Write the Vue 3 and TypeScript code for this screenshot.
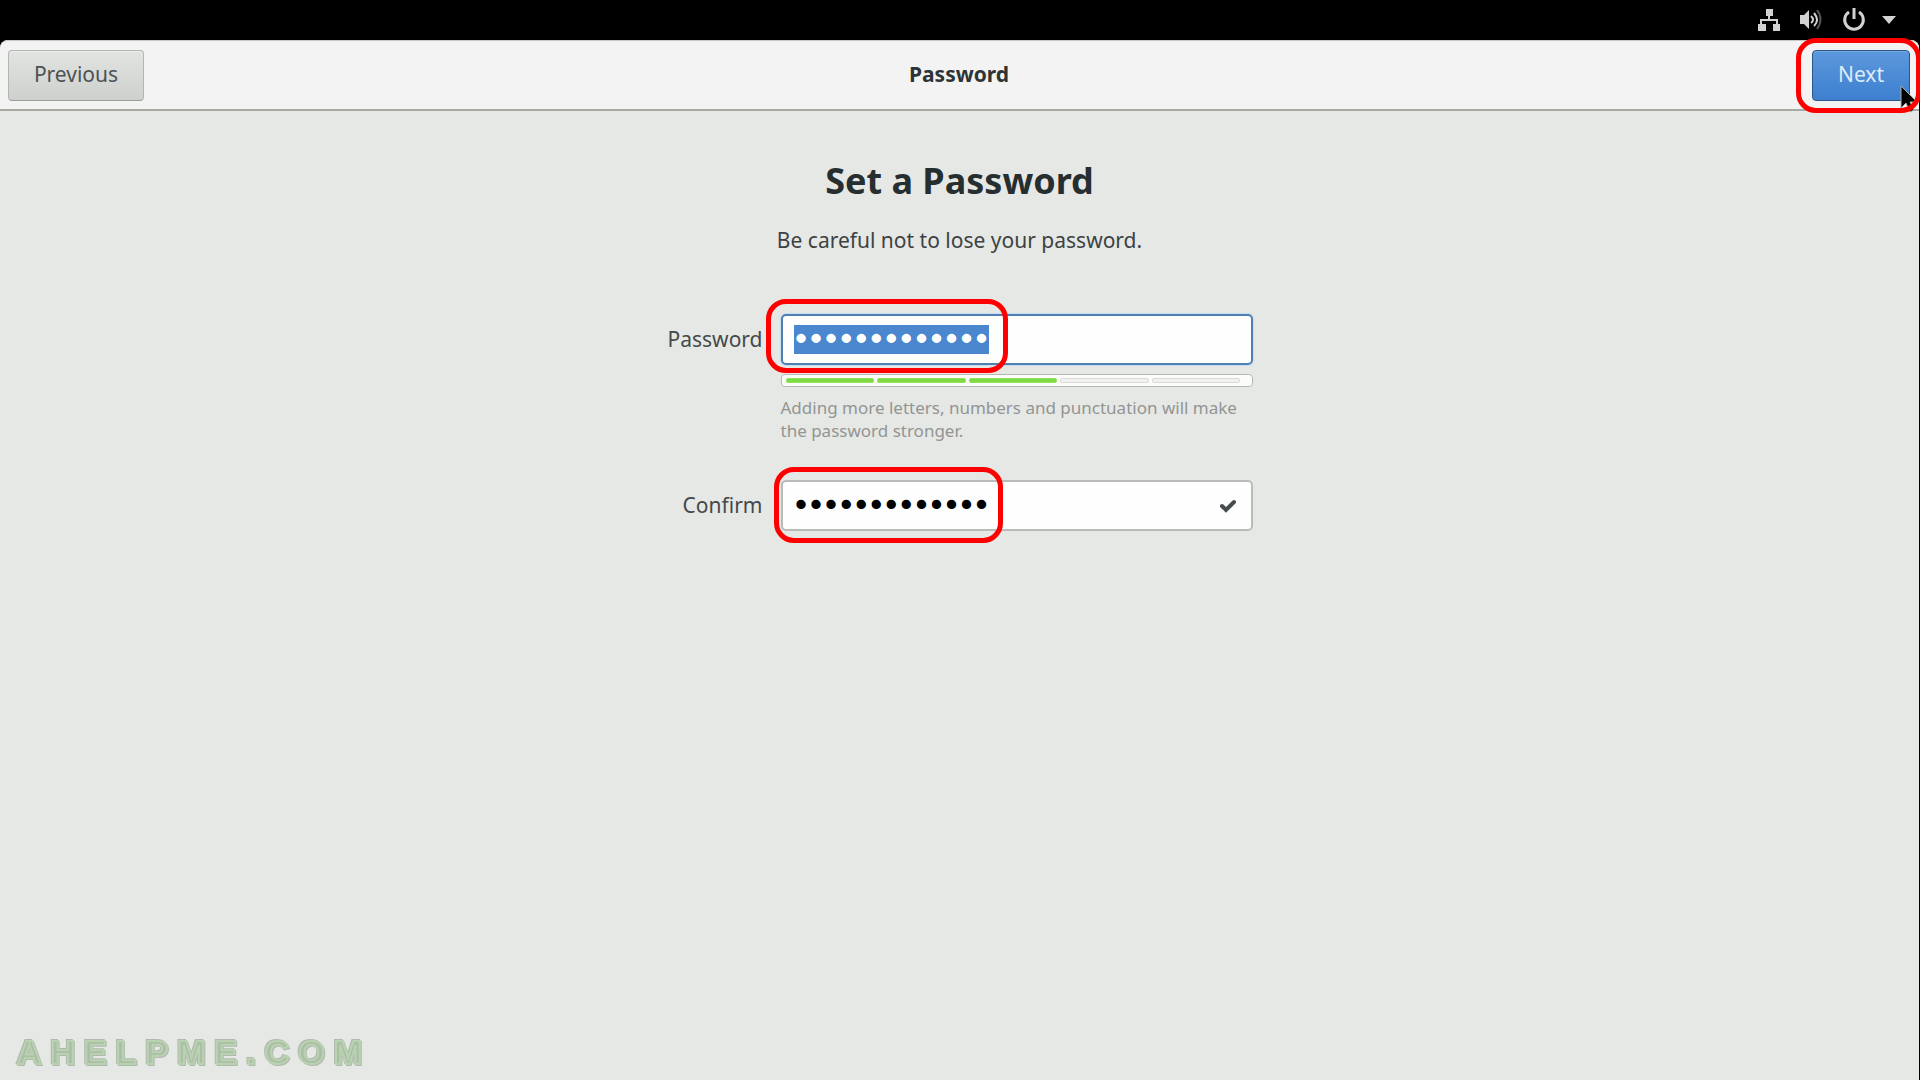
<script setup lang="ts">
import { onMounted, ref } from 'vue'

const password = ref('correct-horse')
const confirmation = ref('correct-horse')
const strength = 3
const levels = 5
const passwordField = ref<HTMLInputElement | null>(null)

onMounted(() => {
  passwordField.value?.focus()
  passwordField.value?.select()
})
</script>

<template>
  <div class="screen">
    <div class="topbar">
      <svg class="tray" viewBox="0 0 24 24" aria-label="Network">
        <path d="M9 1h7v7h-3v3h8v5h2v7h-7v-7h3v-3H5v3h4v7H1v-7h2v-5h8V8H9z" />
      </svg>
      <svg class="tray volume" viewBox="0 0 24 24" aria-label="Volume">
        <path d="M1 7h4l5-5v19l-5-5H1z" />
        <path class="wave" d="M12 8q4 4 0 7M15 5q6 7 0 13" />
        <path class="wave dim" d="M18 2q7 9 0 19" />
      </svg>
      <svg class="tray power" viewBox="0 0 24 24" aria-label="Power">
        <path class="ring" d="M7 4a9.300 9.300 0 1 0 10 0M12 0v11" />
      </svg>
      <svg class="tray arrow" viewBox="0 0 24 24" aria-label="System menu">
        <path d="M5 8h14l-7 8z" />
      </svg>
    </div>

    <main class="window">
      <header class="headerbar">
        <button type="button" class="btn">Previous</button>
        <div class="title">Password</div>
        <div class="next-wrap">
          <button type="button" class="btn suggested">Next</button>
          <svg class="pointer" viewBox="0 0 20 30" aria-hidden="true">
            <path d="M2 1v22l5-5 4 9 4-2-4-8h7z" />
          </svg>
          <span class="mark mark-next"></span>
        </div>
      </header>

      <section class="page">
        <h1>Set a Password</h1>
        <p class="lead">Be careful not to lose your password.</p>

        <form class="form" @submit.prevent>
          <label for="password">Password</label>
          <div class="field">
            <input id="password" ref="passwordField" v-model="password" type="password" />
            <span class="mark mark-password"></span>
          </div>
          <div class="feedback">
            <div class="strength" role="meter" aria-label="Password strength" :aria-valuenow="strength" aria-valuemin="0" :aria-valuemax="levels">
              <span v-for="n in levels" :key="n" :class="{ filled: n <= strength }"></span>
            </div>
            <p class="hint">Adding more letters, numbers and punctuation will make the password stronger.</p>
          </div>
          <label for="confirm">Confirm</label>
          <div class="field">
            <input id="confirm" v-model="confirmation" type="password" />
            <svg class="check" viewBox="0 0 18 16" aria-hidden="true">
              <path d="M3 8l4 4 8-8" />
            </svg>
            <span class="mark mark-confirm"></span>
          </div>
        </form>
      </section>

      <div class="watermark">AHELPME.COM</div>
    </main>
  </div>
</template>

<style>
body {
  margin: 0;
  background: #000;
}
</style>

<style scoped>
.screen {
  display: flex;
  flex-direction: column;
  min-height: 100vh;
  background: #000;
  color: #2e3436;
  font-family: "Noto Sans", "Open Sans", sans-serif;
  font-size: 21px;
  overflow: hidden;
}

.topbar {
  display: flex;
  align-items: center;
  justify-content: flex-end;
  height: 40px;
  padding-right: 19px;
  box-sizing: border-box;
}
.tray {
  width: 24px;
  height: 24px;
  fill: #d2d2d2;
}
.volume {
  margin-left: 18px;
}
.power {
  margin-left: 19px;
}
.arrow {
  margin-left: 11px;
}
.wave,
.ring {
  fill: none;
  stroke: #d2d2d2;
  stroke-width: 2;
}
.ring {
  stroke-width: 3;
}
.dim {
  stroke: #555;
}

.window {
  position: relative;
  display: flex;
  flex: 1;
  flex-direction: column;
  margin-right: 1px;
  background: #e6e8e5;
  border-radius: 8px 8px 0 0;
}
.headerbar {
  display: grid;
  grid-template-columns: 1fr auto 1fr;
  align-items: center;
  height: 71px;
  padding: 0 9px 0 8px;
  box-sizing: border-box;
  background: #f3f3f3;
  border-top: 1px solid #c8c8c8;
  border-bottom: 2px solid #a8aba5;
  border-radius: 8px 8px 0 0;
}
.title {
  padding-bottom: 2px;
  font-weight: 700;
}
.btn {
  height: 51px;
  width: 136px;
  padding: 0 0 2px;
  border: 1px solid #b2b6b0;
  border-bottom-color: #9a9e98;
  border-radius: 4px;
  background: linear-gradient(#e2e4e1, #cdd0cc);
  box-shadow: inset 0 1px #eceeec;
  color: #4c5254;
  font: inherit;
}
.suggested {
  width: 98px;
  border-color: #2c5687;
  background: linear-gradient(#5c98dc, #3d80cf);
  box-shadow: inset 0 1px #78aae2;
  color: #dcebfa;
}
.next-wrap {
  position: relative;
  justify-self: end;
}

/* Red call-outs lie over the controls they point at */
.mark {
  position: absolute;
  box-sizing: border-box;
  border: 5px solid #f00;
  border-radius: 20px;
  pointer-events: none;
}
.mark-next {
  inset: -12px -11px -12px -16px;
}
.mark-password {
  top: -15px;
  left: -15px;
  width: 242px;
  height: 74px;
}
.mark-confirm {
  top: -13px;
  left: -7px;
  width: 229px;
  height: 76px;
}
.pointer {
  position: absolute;
  top: 35px;
  right: -9px;
  width: 20px;
  height: 30px;
  fill: #000;
  stroke: #aaa;
  stroke-width: 1;
}

.page {
  display: flex;
  flex: 1;
  flex-direction: column;
  align-items: center;
  padding-top: 42px;
}
h1 {
  margin: 0;
  font-size: 36px;
  line-height: 56px;
  font-weight: 700;
  color: #272e30;
}
.lead {
  margin: 16px 0 0;
  line-height: 30px;
  color: #3c4244;
}
.form {
  display: grid;
  grid-template-columns: 96px minmax(0, 472px);
  column-gap: 18px;
  align-items: center;
  margin-top: 59px;
}
.form label {
  justify-self: end;
  padding-bottom: 2px;
  color: #45494b;
}
.field {
  position: relative;
}
.field input {
  display: block;
  width: 100%;
  height: 51px;
  padding: 0 11px;
  box-sizing: border-box;
  border: 2px solid #b9bcb8;
  border-radius: 5px;
  background: #fdfefd;
  color: #000;
  font: 25px "DejaVu Sans Mono", monospace;
  -webkit-text-stroke: 2px #000;
  outline: none;
}
.field input:focus {
  border-color: #5080b0;
  box-shadow: 0 0 1px 1px #c6dcf2;
}
.field input::selection {
  background: #4a87cf;
  color: #fff;
  text-shadow: 1px 0 #fff, -1px 0 #fff, 0 1px #fff, 0 -1px #fff;
}
.check {
  position: absolute;
  top: 18px;
  right: 16px;
  width: 18px;
  height: 16px;
  fill: none;
  stroke: #474d4f;
  stroke-width: 4;
  stroke-linecap: round;
}
.feedback {
  grid-column: 2;
}
.strength {
  display: flex;
  gap: 3px;
  height: 13px;
  margin-top: 9px;
  padding: 3px 11px 3px 4px;
  box-sizing: border-box;
  border: 1px solid #b6bab4;
  border-radius: 4px;
  background: #fcfdfb;
}
.strength span {
  flex: 1;
  box-sizing: border-box;
  border: 1px solid #d9dbd8;
  border-radius: 2px;
  background: #f1f2f0;
}
.strength .filled {
  border-color: #8ee35a;
  background: #7edb45;
}
.hint {
  margin: 9px 0 38px;
  font-size: 17px;
  line-height: 23px;
  color: #929593;
}
.watermark {
  padding: 0 0 8px 17px;
  font: 700 34px/40px "Liberation Sans", Arial, sans-serif;
  letter-spacing: 9px;
  color: #adbea8;
  -webkit-text-stroke: 2px #b9d3b0;
  filter: drop-shadow(1px 1px #b0b9ae) drop-shadow(-1px -1px #b0b9ae);
}
</style>
